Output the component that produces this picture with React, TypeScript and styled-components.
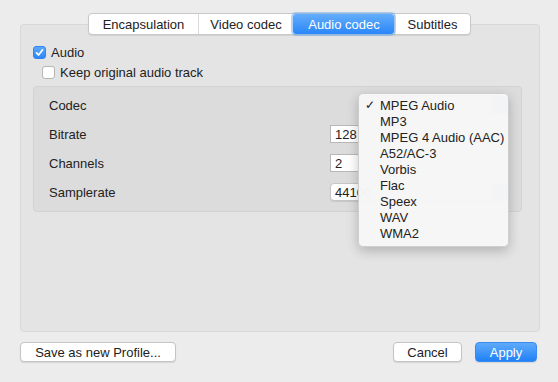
import styled, { createGlobalStyle } from "styled-components";

const GlobalStyle = createGlobalStyle`
    html, body {
        margin: 0;
        padding: 0;
        background: #ececec;
    }
    * {
        box-sizing: border-box;
    }
`

const Page = styled.div`
    position: relative;
    width: 558px;
    height: 382px;
    padding-top: 13px;
    background: #ececec;
    font-family: "Liberation Sans", Arial, sans-serif;
    font-size: 13px;
    color: #222;
`

const TabBar = styled.div`
    position: relative;
    z-index: 2;
    display: flex;
    width: fit-content;
    height: 22px;
    margin: 0 auto -11px 88px;
    background: #fff;
    border: 1px solid #c8c8c8;
    border-radius: 4px;
    box-shadow: 0 1px 1px rgba(0, 0, 0, 0.08);
`

const Tab = styled.div<{ $active?: boolean; $w: number }>`
    display: flex;
    align-items: center;
    justify-content: center;
    width: ${p => p.$w}px;
    height: 100%;
    border-left: 1px solid ${p => (p.$active ? "transparent" : "#dadada")};
    &:first-child {
        border-left: none;
    }
    color: ${p => (p.$active ? "#fff" : "#222")};
    background: ${p => (p.$active ? "linear-gradient(#64adfb, #2a86f8)" : "transparent")};
    box-shadow: ${p => (p.$active ? "0 0 0 2px rgba(90, 160, 245, 0.45)" : "none")};
    border-radius: ${p => (p.$active ? "3px" : "0")};
    position: relative;
    z-index: ${p => (p.$active ? 1 : 0)};
`

const Panel = styled.div`
    height: 308px;
    margin: 0 18px 0 20px;
    padding: 21px 17px 0 12px;
    background: #e4e4e4;
    border: 1px solid #d8d8d8;
    border-radius: 4px;
`

const CheckRow = styled.label<{ $indent?: number }>`
    display: flex;
    align-items: center;
    gap: 5px;
    height: 13px;
    margin-left: ${p => p.$indent || 0}px;
    margin-bottom: 7px;
`

const Box = styled.span<{ $checked?: boolean }>`
    display: flex;
    align-items: center;
    justify-content: center;
    width: 13px;
    height: 13px;
    border-radius: 3px;
    background: ${p => (p.$checked ? "linear-gradient(#5aa9fb, #2d87f7)" : "#fff")};
    border: 1px solid ${p => (p.$checked ? "#2f84ee" : "#b5b5b5")};
`

const Group = styled.div`
    margin-top: 6px;
    padding: 7px 12px 8px 15px;
    background: #dcdcdc;
    border: 1px solid #d2d2d2;
    border-radius: 4px;
    display: flex;
    flex-direction: column;
    gap: 7px;
`

const Row = styled.div`
    display: flex;
    align-items: center;
    justify-content: space-between;
    height: 22px;
`

const Field = styled.div<{ $rounded?: boolean; $w: number }>`
    display: flex;
    align-items: center;
    width: ${p => p.$w}px;
    height: 18px;
    padding-left: 4px;
    background: #fff;
    border: 1px solid ${p => (p.$rounded ? "#c6c6c6" : "#b8b8b8")};
    border-radius: ${p => (p.$rounded ? "4px" : "0")};
    box-shadow: ${p => (p.$rounded ? "0 1px 1px rgba(0,0,0,0.1)" : "none")};
    overflow: hidden;
    position: relative;
`

const BlueCap = styled.span`
    position: absolute;
    right: 0;
    top: 0;
    bottom: 0;
    width: 16px;
    background: linear-gradient(#5aa9fb, #2d87f7);
`

const Menu = styled.div`
    position: absolute;
    z-index: 5;
    left: 358px;
    top: 93px;
    width: 151px;
    padding: 3px 0 5px;
    background: rgba(246, 246, 246, 0.98);
    border: 1px solid #cfcfcf;
    border-radius: 5px;
    box-shadow: 0 4px 12px rgba(0, 0, 0, 0.22);
`

const MenuItem = styled.div`
    display: flex;
    align-items: center;
    height: 16px;
    padding-left: 21px;
    position: relative;
    color: #222;
`

const Tick = styled.span`
    position: absolute;
    left: 6px;
    font-size: 12px;
`

const Footer = styled.div`
    display: flex;
    align-items: center;
    gap: 13px;
    margin: 10px 21px 0 20px;
`

const Button = styled.div<{ $primary?: boolean; $w: number }>`
    display: flex;
    align-items: center;
    justify-content: center;
    width: ${p => p.$w}px;
    height: 20px;
    border-radius: 4px;
    color: ${p => (p.$primary ? "#fff" : "#222")};
    background: ${p => (p.$primary ? "linear-gradient(#5fabfb, #2181f7)" : "#fff")};
    border: 1px solid ${p => (p.$primary ? "#3a8af0" : "#c4c4c4")};
    box-shadow: 0 1px 1px rgba(0, 0, 0, 0.1);
`

const Spacer = styled.div`
    flex: 1;
`

const tabs = [
    { label: "Encapsulation", w: 109 },
    { label: "Video codec", w: 95 },
    { label: "Audio codec", w: 101, active: true },
    { label: "Subtitles", w: 76 },
]

const codecs = ["MPEG Audio", "MP3", "MPEG 4 Audio (AAC)", "A52/AC-3", "Vorbis", "Flac", "Speex", "WAV", "WMA2"]

function Check() {
    return (
        <svg width="9" height="9" viewBox="0 0 9 9">
            <path d="M1.5 4.8 L3.6 7 L7.6 1.8" fill="none" stroke="#fff" strokeWidth="1.7" strokeLinecap="round" strokeLinejoin="round" />
        </svg>
    )
}

export default function App() {
    return (
        <Page>
            <GlobalStyle />
            <TabBar>
                {tabs.map(t => (
                    <Tab key={t.label} $w={t.w} $active={t.active}>{t.label}</Tab>
                ))}
            </TabBar>
            <Panel>
                <CheckRow>
                    <Box $checked><Check /></Box>
                    Audio
                </CheckRow>
                <CheckRow $indent={9}>
                    <Box />
                    Keep original audio track
                </CheckRow>
                <Group>
                    <Row>
                        <span>Codec</span>
                        <Field $w={150} $rounded>
                            <BlueCap />
                        </Field>
                    </Row>
                    <Row>
                        <span>Bitrate</span>
                        <Field $w={179}>128</Field>
                    </Row>
                    <Row>
                        <span>Channels</span>
                        <Field $w={179}>2</Field>
                    </Row>
                    <Row>
                        <span>Samplerate</span>
                        <Field $w={179} $rounded>
                            44100
                            <BlueCap />
                        </Field>
                    </Row>
                </Group>
            </Panel>
            <Footer>
                <Button $w={156}>Save as new Profile...</Button>
                <Spacer />
                <Button $w={69}>Cancel</Button>
                <Button $w={62} $primary>Apply</Button>
            </Footer>
            <Menu>
                {codecs.map((c, i) => (
                    <MenuItem key={c}>
                        {i === 0 && <Tick>✓</Tick>}
                        {c}
                    </MenuItem>
                ))}
            </Menu>
        </Page>
    )
}
